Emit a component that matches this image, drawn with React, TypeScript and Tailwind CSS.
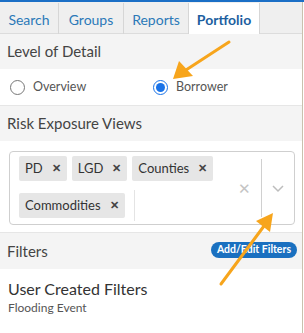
import React from 'react'

const FONT = { fontFamily: 'Lato, "Open Sans", Arial, sans-serif' }

const TABS = [
  { label: 'Search', w: 'w-[59px]' },
  { label: 'Groups', w: 'w-[65px]' },
  { label: 'Reports', w: 'w-[65px]' },
  { label: 'Portfolio', w: 'w-[71px]', active: true },
]

const CHIPS = [['PD', 'LGD', 'Counties'], ['Commodities']]

const Chip = ({ label }: { label: string }) => (
  <span className="flex items-center h-[25px] px-[6px] gap-[9px] bg-[#e6e6e6] rounded-[2px] text-[13px] text-[#333]">
    {label}
    <span className="text-[11px] font-bold text-[#444]">✕</span>
  </span>
)

const Radio = ({ checked, label }: { checked?: boolean; label: string }) => (
  <label className="flex items-center gap-[8px] text-[12.5px] text-[#555]">
    {checked ? (
      <span className="w-[15px] h-[15px] rounded-full border-[1.5px] border-[#1a73e8] flex items-center justify-center">
        <span className="w-[9px] h-[9px] rounded-full bg-[#1a73e8]" />
      </span>
    ) : (
      <span className="w-[15px] h-[15px] rounded-full border border-[#777]" />
    )}
    {label}
  </label>
)

export default function App() {
  return (
    <div className="relative w-[304px] h-[333px] overflow-hidden bg-white" style={FONT}>
      <div className="h-[2px] bg-[#1b6fc6]" />
      <div className="w-[303px] border-r border-[#c9c1ae] h-[331px] flex flex-col">
        {/* tabs */}
        <div className="h-[32px] flex bg-[#efefef] border-b border-[#dcdcdc] pt-[1px]">
          {TABS.map(t => (
            <div
              key={t.label}
              className={`${t.w} h-[32px] flex items-center justify-center text-[14px] border-r border-[#d6d6d6] ${
                t.active ? 'bg-white font-bold text-[#1d5f9f]' : 'text-[#2b79b8]'
              }`}
            >
              {t.label}
            </div>
          ))}
        </div>

        <div className="h-[35px] flex items-center px-[7px] bg-[#f4f4f4] text-[15px] text-[#444]">Level of Detail</div>
        <div className="h-[37px] flex items-center pl-[10px] border-b border-[#e6e6e6]">
          <div className="w-[143px]">
            <Radio label="Overview" />
          </div>
          <Radio checked label="Borrower" />
        </div>

        <div className="h-[35px] flex items-center px-[7px] bg-[#f4f4f4] text-[15px] text-[#444]">Risk Exposure Views</div>
        <div className="h-[92px] pt-[10px] pl-[9px] pr-[7px] border-b border-[#e6e6e6]">
          <div className="h-[74px] border border-[#cfcfcf] rounded-[4px] flex">
            <div className="flex-1 flex flex-col gap-[9px] pt-[4px] pl-[9px]">
              {CHIPS.map((row, i) => (
                <div key={i} className="flex gap-[5px] items-center">
                  {row.map(c => (
                    <Chip key={c} label={c} />
                  ))}
                  {i === 1 && <span className="ml-[4px] w-px h-[31px] bg-[#e4e4e4]" />}
                </div>
              ))}
            </div>
            <div className="flex items-center text-[#c4c4c4]">
              <span className="text-[15px] mr-[10px]">✕</span>
              <span className="w-px h-[58px] bg-[#d0d0d0]" />
              <svg width="32" height="16" viewBox="0 0 32 16">
                <path d="M11 6l5 5 5-5" fill="none" stroke="#bdbdbd" strokeWidth="1.5" />
              </svg>
            </div>
          </div>
        </div>

        <div className="h-[36px] flex items-center justify-between pl-[7px] pr-[5px] bg-[#f4f4f4]">
          <span className="text-[15px] text-[#444]">Filters</span>
          <span className="h-[16px] px-[6px] rounded-full bg-[#1a70c0] text-white text-[10.5px] font-bold flex items-center -mt-[3px]">
            Add/Edit Filters
          </span>
        </div>
        <div className="pt-[10px] px-[8px]">
          <div className="text-[16px] text-[#333] leading-[20px]">User Created Filters</div>
          <div className="text-[12px] text-[#555] leading-[16px] mt-[1px]">Flooding Event</div>
        </div>
      </div>

      {/* annotation arrows */}
      <svg className="absolute inset-0 pointer-events-none" width="304" height="333">
        <line x1="229" y1="42" x2="186" y2="70" stroke="#f7a51c" strokeWidth="3" strokeLinecap="round" />
        <polygon points="173,79 179,61 193,76" fill="#f7a51c" />
        <line x1="221" y1="284" x2="264" y2="226" stroke="#f7a51c" strokeWidth="3" strokeLinecap="round" />
        <polygon points="273,213 256,221 270,232" fill="#f7a51c" />
      </svg>
    </div>
  )
}
